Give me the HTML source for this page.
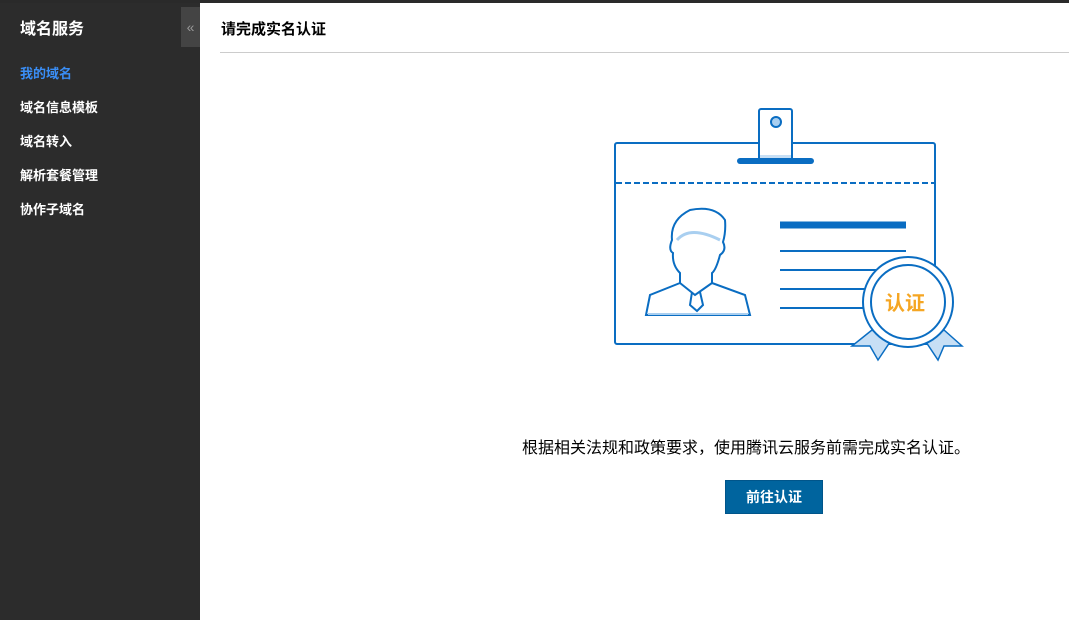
<!DOCTYPE html>
<html><head><meta charset="utf-8"><style>
*{margin:0;padding:0;box-sizing:border-box}
body{width:1069px;height:620px;overflow:hidden;background:#fff;font-family:"Liberation Sans","Noto Sans CJK SC",sans-serif;position:relative}
.top{position:absolute;left:0;top:0;width:1069px;height:3px;background:#2a2a2a}
.side{position:absolute;left:0;top:3px;width:200px;height:617px;background:#2c2c2c}
.side h1{position:absolute;left:20px;top:12px;font-size:16px;color:#fff;font-weight:bold}
.side a{position:absolute;left:20px;font-size:13px;color:#fff;font-weight:bold}
.col{position:absolute;left:181px;top:4px;width:19px;height:40px;background:#444;color:#999;font-size:14px;text-align:center;line-height:40px}
.title{position:absolute;left:221px;top:18px;font-size:15px;font-weight:bold;color:#000}
.hr{position:absolute;left:220px;top:52px;width:849px;height:1px;background:#ccc}
.msg{position:absolute;left:522px;top:434px;font-size:16px;color:#000}
.btn{position:absolute;left:725px;top:480px;width:98px;height:34px;background:#00649e;color:#fff;font-size:14px;font-weight:bold;text-align:center;line-height:32px;border:1px solid #00558a}
</style></head><body>
<div class="top"></div>
<div class="side">
<h1>域名服务</h1>
<div class="col">«</div>
<a style="top:60px;color:#3a8ef6">我的域名</a>
<a style="top:94px">域名信息模板</a>
<a style="top:128px">域名转入</a>
<a style="top:162px">解析套餐管理</a>
<a style="top:196px">协作子域名</a>
</div>
<div class="title">请完成实名认证</div>
<div class="hr"></div>
<svg style="position:absolute;left:0;top:0" width="1069" height="620">
<g fill="none" stroke="#0a6dc2" stroke-width="2">
<rect x="615" y="143" width="320" height="201" rx="2" fill="#fff"/>
<line x1="616" y1="183" x2="934" y2="183" stroke-dasharray="6,3"/>
<rect x="759" y="109" width="33" height="52" rx="2" fill="#fff"/>
<rect x="760" y="155" width="31" height="5" fill="#c7dff5" stroke="none"/>
<circle cx="776" cy="122" r="5" fill="#a9cff0"/>
<line x1="740" y1="161" x2="811" y2="161" stroke-width="6" stroke-linecap="round"/>
<line x1="780" y1="225" x2="906" y2="225" stroke-width="7"/>
<line x1="780" y1="251" x2="906" y2="251"/>
<line x1="780" y1="270" x2="906" y2="270"/>
<line x1="780" y1="289" x2="906" y2="289"/>
<line x1="780" y1="308" x2="906" y2="308"/>
<path d="M646 315 L650 295 L680 283 L680 273 Q672 265 673 253 Q668 250 672 240 Q670 220 690 210 Q715 205 725 220 Q726 232 723 242 Q727 250 720 255 Q716 270 712 273 L712 283 L745 295 L750 315 Z" fill="#fff"/>
<path d="M677 240 Q690 225 720 240" stroke="#a9cff0" stroke-width="3"/>
<path d="M680 283 L695 295 L712 283 M692 292 L690 305 L697 311 L703 305 L700 292"/>
<line x1="648" y1="314" x2="748" y2="314" stroke="#a9cff0" stroke-width="2"/>
<path d="M872 330 L852 346 L870 346 L878 360 L890 342 Z M944 330 L962 346 L944 346 L938 360 L926 342 Z" fill="#c7dff5" stroke-width="1.5"/>
<circle cx="908" cy="302" r="45" fill="#fff"/>
<circle cx="908" cy="302" r="37"/>
</g>
<text x="885" y="310" font-size="20" font-weight="bold" fill="#f5a623" font-family="Noto Sans CJK SC,sans-serif">认证</text>
</svg>
<div class="msg">根据相关法规和政策要求，使用腾讯云服务前需完成实名认证。</div>
<div class="btn">前往认证</div>
</body></html>
